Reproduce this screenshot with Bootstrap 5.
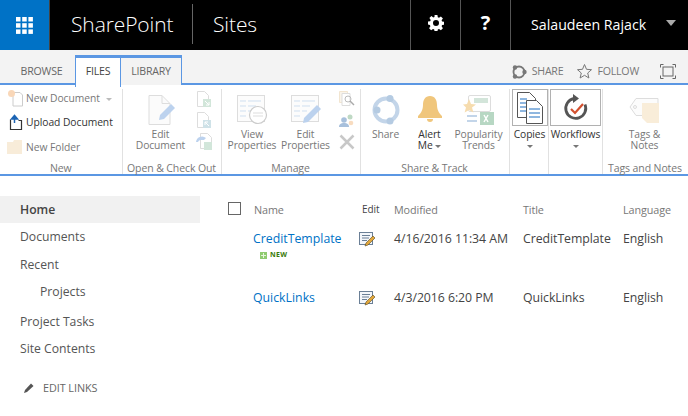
<!DOCTYPE html>
<html lang="en"><head><meta charset="utf-8"><title>Sites</title>
<link href="https://cdn.jsdelivr.net/npm/bootstrap@5.3.0/dist/css/bootstrap.min.css" rel="stylesheet">
<style>
html,body{height:416px;overflow:hidden}
body{font-family:"Open Sans","Noto Sans",sans-serif;font-size:12px;color:#444;background:#fff}
a{text-decoration:none}
.suite{height:50px;background:#000;color:#fff}
.waffle{width:50px;background:#0072c6;border-right:1px solid #444}
.brand{font-size:21px;font-weight:300;height:40px;line-height:41px;margin-top:4px;letter-spacing:-.1px;white-space:nowrap}
.brand-one{width:143px;padding-left:21px;border-right:1px solid #666}
.brand-two{padding-left:20px}
.suite-btn{width:50px;border-left:1px solid #555;font-weight:700;font-size:20px}
.suite-user{width:178px;border-left:1px solid #555;font-size:14.2px;padding:0 12px 0 20px}
.caret-gray{width:0;height:0;border:5.5px solid transparent;border-top:6px solid #aaa;border-bottom:0}
.tabs{height:35px;background:#f3f3f3;border-bottom:2px solid #5b97e3;padding-left:10px}
.rtab{height:30px;margin-top:5px;font-size:10.6px;color:#666;letter-spacing:-.2px}
.rtab-plain{width:63px;padding-top:9px;text-align:center}
.rtab-on{width:46px;margin-left:2px;background:#fff;border:1px solid #5b97e3;border-top:3px solid #5b97e3;border-bottom:0;text-align:center;padding:6px 0 0;color:#444;position:relative;z-index:1;height:32px}
.rtab-lib{width:61px;background:#f3f3f3;border:1px solid #5b97e3;border-top:3px solid #5b97e3;border-left:0;border-bottom:0;text-align:center;padding:6px 0 0}
.tools{font-size:10.6px;color:#777;letter-spacing:-.2px;padding-top:13px}
.gap-star{margin-right:13px}
.gap-text{margin-right:4px}
.gap-share{margin-right:5px}
.focus-ico{margin:0 12px 0 21px}
.ribbon{height:91px;border-bottom:2px solid #5b97e3;color:#777;padding-top:4px;background:#fff}
.rgroup{border-right:1px solid #e1e1e1;height:85px;display:flex;flex-direction:column;flex:none}
.rbody{height:67px;display:flex;flex:none}
.rlabel{font-size:10.5px;color:#777;text-align:center;letter-spacing:-.1px;line-height:15px;white-space:nowrap;padding-top:5px}
.bigbtn{display:flex;flex-direction:column;align-items:center;font-size:10.3px;line-height:11px;text-align:center;letter-spacing:-.1px;color:#777;flex:none;padding-top:6px;white-space:nowrap}
.bigbtn svg{display:block;margin-bottom:4px}
.bigbtn span{display:block}
.dark{color:#333}
.boxed{border:1px solid #b1b1b1;height:37px;display:flex;align-items:center;justify-content:center;margin-bottom:3px}
.boxed svg{margin:0}
.stackbtn{padding-top:0}
.rowbtn{display:flex;flex:none;align-items:center;font-size:10.3px;height:24.5px;letter-spacing:-.05px;white-space:nowrap}
.rowlist{flex-direction:column;padding-left:7px;margin-top:-3px;margin-bottom:3px}
.rowbtn svg{margin-right:2px}
.mini{display:flex;flex-direction:column;justify-content:space-between;height:61px;padding-top:2px;margin-left:8px}
.dn{width:0;height:0;border:3px solid transparent;border-top:3px solid #777;border-bottom:0;display:inline-block;vertical-align:middle}
.bigbtn .dn-under{display:block;margin-top:5px}
.dn-pale{border-top-color:#bbb;margin:3px 0 0 6px}
.w-new{width:122.500px}.w-open{width:99px}.w-manage{width:139px}.w-share{width:149px}.w-copies{width:39px}.w-flow{width:54px}.w-tags{width:85px;border-right:0}
.b-edit{width:54px;margin-left:11px}
.b-view{width:57px;margin-left:2px}
.b-prop{width:50px}
.b-share{width:50px}
.b-alert{width:38px}
.b-pop{width:60px}
.b-copy{width:38px;margin-left:1px}
.b-flow{width:52px;margin-left:1px}
.b-tags{width:84px}
.box-copy{width:36px}
.box-flow{width:51px}
.sidenav{width:200px;padding-top:20px;flex:none}
.nav-it{height:27.3px;line-height:27px;padding-left:20px;font-size:12.2px;color:#555}
.nav-sel{background:#f1f1f1;font-weight:600;color:#444}
.nav-sub{padding-left:40px}
.nav-gap{margin-top:3px}
.nav-edit{color:#666;margin-top:13px;padding-left:23px;font-size:10.8px}
.nav-edit svg{margin-right:8px}
.listing{padding:0 0 0 28px;flex:1}
.lrow{display:grid;grid-template-columns:25px 106px 35px 129px 100px 65px;align-items:center;white-space:nowrap}
.lhead{height:30px;font-size:10.8px;color:#777;margin-top:19px;letter-spacing:-.1px}
.lhead .ed{color:#444;font-size:10px;margin-top:-2px;padding-left:3px}
.lhead .nm{padding-left:1px}
.lcell{font-size:12.3px;color:#444;letter-spacing:-.05px}
.lname{font-size:12.3px;color:#0072c6}
.cbox{width:13px;height:13px;border:1px solid #666;display:block;margin-top:-3px}
.newtag{font-size:7px;font-weight:700;color:#3a7a0a;letter-spacing:.3px;display:flex;align-items:center;gap:3px;margin:-4px 0 0 32px;height:10px}
.r1{height:29px;margin-top:0}
.r2{height:29px;margin-top:24px}
</style></head><body>
<div class="suite d-flex align-items-stretch">
 <div class="waffle d-flex align-items-center justify-content-center">
  <svg width="17" height="17" viewBox="0 0 17 17" fill="#fff"><rect width="4.5" height="4.5"/><rect x="6.2" width="4.5" height="4.5"/><rect x="12.4" width="4.5" height="4.5"/><rect y="6.2" width="4.5" height="4.5"/><rect x="6.2" y="6.2" width="4.5" height="4.5"/><rect x="12.4" y="6.2" width="4.5" height="4.5"/><rect y="12.4" width="4.5" height="4.5"/><rect x="6.2" y="12.4" width="4.5" height="4.5"/><rect x="12.4" y="12.4" width="4.5" height="4.5"/></svg>
 </div>
 <div class="brand brand-one">SharePoint</div>
 <div class="brand brand-two">Sites</div>
 <div class="ms-auto d-flex">
  <div class="suite-btn d-flex align-items-center justify-content-center pb-1">
   <svg width="16" height="16" viewBox="0 0 16 16"><path fill="#fff" fill-rule="evenodd" d="M6.6 0h2.8l.4 2.2 1.2.5L12.9 1.400l2 2-1.300 1.900.5 1.200 2.200.4v2.800l-2.200.4-.5 1.200 1.300 1.900-2 2-1.900-1.300-1.200.5-.4 2.200H6.600l-.4-2.200-1.200-.5-1.900 1.300-2-2 1.300-1.900-.5-1.200L0 9.400V6.600l2.200-.4.5-1.200L1.400 3.100l2-2 1.900 1.300 1.200-.5zM8 5a3 3 0 1 0 0 6 3 3 0 0 0 0-6z"/></svg>
  </div>
  <div class="suite-btn d-flex align-items-center justify-content-center pb-1">?</div>
  <div class="suite-user d-flex align-items-center justify-content-between"><span>Salaudeen Rajack</span><span class="caret-gray mb-1"></span></div>
 </div>
</div>
<div class="tabs d-flex align-items-start">
 <div class="rtab rtab-plain">BROWSE</div>
 <div class="rtab rtab-on">FILES</div>
 <div class="rtab rtab-lib">LIBRARY</div>
 <div class="tools ms-auto d-flex align-items-center">
  <svg class="gap-share" width="16" height="16" viewBox="0 0 16 16"><circle cx="8" cy="8" r="5.500" fill="none" stroke="#777" stroke-width="1.800"/><circle cx="4" cy="3.500" r="2.200" fill="#777"/><circle cx="4" cy="12.500" r="2.200" fill="#777"/><circle cx="13.500" cy="8" r="2.200" fill="#777"/></svg>
  <span class="gap-star">SHARE</span>
  <svg class="gap-text" width="17" height="17" viewBox="0 0 17 17"><path d="M8.500 1.500l2 4.800 5 .4-3.800 3.300 1.200 5-4.400-2.700-4.400 2.700 1.200-5L1.500 6.700l5-.4z" fill="none" stroke="#777"/></svg>
  <span>FOLLOW</span>
  <svg class="focus-ico" width="16" height="15" viewBox="0 0 16 15" fill="none" stroke="#666"><path d="M.5 3.500v-3h3M12.500.5h3v3M.5 11.500v3h3M12.500 14.500h3v-3"/><rect x="3" y="3" width="10" height="9"/></svg>
 </div>
</div>
<div class="ribbon d-flex">
 <div class="rgroup w-new">
  <div class="rbody rowlist">
   <div class="rowbtn"><svg width="17" height="19" viewBox="0 0 17 19" fill="none"><path d="M6 3.500h7l2.500 2.500v11H6z" stroke="#ccc" fill="#fff"/><circle cx="4.500" cy="4.500" r="3.500" fill="#f9d7b8"/></svg><span>New Document</span><span class="dn dn-pale"></span></div>
   <div class="rowbtn dark"><svg width="17" height="19" viewBox="0 0 17 19" fill="none"><path d="M3.500 6.500v10h11V7.500h-3" stroke="#333" stroke-width="1.200"/><path d="M7.500 10V3M4.500 6l3-3.500 3 3.500z" stroke="#1c64b4" fill="#1c64b4" stroke-width="1.500"/></svg><span>Upload Document</span></div>
   <div class="rowbtn"><svg width="17" height="14" viewBox="0 0 17 14"><path d="M0 2h6l1-2h8v14H0z" fill="#f8ecd9"/></svg><span>New Folder</span></div>
  </div>
  <div class="rlabel">New</div>
 </div>
 <div class="rgroup w-open">
  <div class="rbody">
   <div class="bigbtn b-edit">
    <svg width="30" height="30" viewBox="0 0 30 30" fill="none"><path d="M3 .5h13l8 8v21H3z" stroke="#ddd" fill="#fbfbfb"/><path d="M16 .5v8h8" stroke="#ddd"/><path d="M13 25l1-5L25 9l4 4-11 11z" fill="#bcd2ee"/></svg>
    <span>Edit</span><span>Document</span>
   </div>
   <div class="mini">
    <svg width="16" height="17" viewBox="0 0 16 17"><path d="M1.500 .5h7l4 4v11h-11z" fill="#fff" stroke="#ddd"/><rect x="7" y="8" width="8" height="8" fill="#d2e6da"/><path d="M9 10l4 4m0-3v3h-3" stroke="#fff" fill="none"/></svg>
    <svg width="16" height="17" viewBox="0 0 16 17"><path d="M1.500 .5h7l4 4v11h-11z" fill="#fff" stroke="#ddd"/><rect x="7" y="8" width="8" height="8" fill="#cfe2e8"/><path d="M13 14l-4-4m0 3v-3h3" stroke="#fff" fill="none"/></svg>
    <svg width="17" height="17" viewBox="0 0 17 17"><path d="M4.500 .5h7l4 4v11h-11z" fill="#fff" stroke="#ddd"/><path d="M0 9a6 6 0 0 1 10-4l-2 2h-3a3 3 0 0 0-3 2z" fill="#bcd2ee"/><rect x="8" y="9" width="8" height="8" fill="#d2e6da"/></svg>
   </div>
  </div>
  <div class="rlabel">Open &amp; Check Out</div>
 </div>
 <div class="rgroup w-manage">
  <div class="rbody">
   <div class="bigbtn b-view">
    <svg width="32" height="30" viewBox="0 0 32 30" fill="none"><rect x="1.500" y=".5" width="27" height="26" stroke="#ddd" fill="#fcfcfc"/><path d="M4 6h6M12 6h13M4 11h6M12 11h8M4 16h6M12 16h5M4 21h6" stroke="#cfdff0"/><circle cx="22" cy="20" r="8.500" fill="#fff" stroke="#ccc" stroke-width="1.200"/><path d="M17 18h10M17 21h10" stroke="#ddd"/></svg>
    <span>View</span><span>Properties</span>
   </div>
   <div class="bigbtn b-prop">
    <svg width="32" height="30" viewBox="0 0 32 30" fill="none"><rect x="1.500" y=".5" width="27" height="26" stroke="#ddd" fill="#fcfcfc"/><path d="M4 6h6M12 6h13M4 11h6M12 11h8M4 16h6M12 16h5M4 21h6" stroke="#cfdff0"/><path d="M13 28l1-5 13-13 4 4-13 13z" fill="#bcd2ee"/></svg>
    <span>Edit</span><span>Properties</span>
   </div>
   <div class="mini">
    <svg width="16" height="16" viewBox="0 0 16 16" fill="none"><path d="M.5.500h8v11h-8z" stroke="#f2e5d0" fill="#faf4ea"/><path d="M3 2.500h8v12H3z" stroke="#ddd" fill="#fff"/><circle cx="9" cy="8" r="3" stroke="#bbb"/><path d="M11 10l4 4" stroke="#aaa" stroke-width="1.500"/></svg>
    <svg width="16" height="16" viewBox="0 0 16 16"><circle cx="5" cy="7" r="2.800" fill="#a8c0dc"/><path d="M0 14c0-3 2-4 5-4s5 1 5 4z" fill="#a8c0dc"/><circle cx="11" cy="4" r="2.500" fill="#bfd9c4"/><circle cx="12" cy="10" r="2.300" fill="#f8dcc0"/></svg>
    <svg width="16" height="16" viewBox="0 0 16 16"><path d="M1.500 1.500l13 13M14.500 1.500l-13 13" stroke="#c8c8c8" stroke-width="2.500"/></svg>
   </div>
  </div>
  <div class="rlabel">Manage</div>
 </div>
 <div class="rgroup w-share">
  <div class="rbody">
   <div class="bigbtn b-share">
    <svg width="30" height="30" viewBox="0 0 30 30"><circle cx="15" cy="15" r="11.500" fill="none" stroke="#c3d5e9" stroke-width="4"/><circle cx="19" cy="3.500" r="3.500" fill="#b5cbe2"/><circle cx="6" cy="15" r="3.500" fill="#b5cbe2"/><circle cx="19" cy="26" r="3.500" fill="#b5cbe2"/></svg>
    <span>Share</span>
   </div>
   <div class="bigbtn dark b-alert">
    <svg width="26" height="30" viewBox="0 0 26 30"><path d="M13 1c5 0 7 4 7 9 0 6 3 9 5 11v2H1v-2c2-2 5-5 5-11 0-5 2-9 7-9z" fill="#f0c67c"/><path d="M10 24a3 3 0 0 0 6 0z" fill="#f0c67c"/></svg>
    <span>Alert</span><span>Me <i class="dn"></i></span>
   </div>
   <div class="bigbtn b-pop">
    <svg width="32" height="30" viewBox="0 0 32 30" fill="none"><rect x="5.500" y=".5" width="22" height="16" rx="1.500" stroke="#ddd"/><rect x="11" y="3" width="14" height="5" fill="#d3e5da"/><path d="M6 4l2 5 5 .4-4 3.200 1.400 5L6 15l-4.400 2.600L3 12.600 0 9.400 4 9z" fill="#f6dcae"/><rect x="17" y="17" width="14" height="13" fill="#b7d7c3"/><path d="M21 20l4 7m0-7l-4 7" stroke="#fff" stroke-width="1.500"/><path d="M4 21h10M4 26h10" stroke="#c3d5e9" stroke-width="2"/></svg>
    <span>Popularity</span><span>Trends</span>
   </div>
  </div>
  <div class="rlabel">Share &amp; Track</div>
 </div>
 <div class="rgroup w-copies">
  <div class="rbody">
   <div class="bigbtn dark b-copy stackbtn">
    <div class="boxed box-copy">
     <svg width="28" height="32" viewBox="0 0 28 32" fill="none"><path d="M1.500.5h12l6 6v19h-18z" fill="#fff" stroke="#555"/><path d="M4 7h7M4 11h11M4 15h11M4 19h11" stroke="#1e6fc0"/><path d="M10.500 8.500h10l6 6v17h-16z" fill="#fff" stroke="#555"/><path d="M13 17h11M13 21h11M13 25h11" stroke="#1e6fc0"/></svg>
    </div>
    <span>Copies</span><i class="dn dn-under"></i>
   </div>
  </div>
 </div>
 <div class="rgroup w-flow">
  <div class="rbody">
   <div class="bigbtn dark b-flow stackbtn">
    <div class="boxed box-flow">
     <svg width="26" height="28" viewBox="0 0 26 28" fill="none"><path d="M11 4.500a10 10 0 1 0 11 6" stroke="#555" stroke-width="2.800"/><path d="M10 0l6 4.500-6 4.500z" fill="#555"/><path d="M8 15l4 4 8-9" stroke="#d3502f" stroke-width="2.200"/></svg>
    </div>
    <span>Workflows</span><i class="dn dn-under"></i>
   </div>
  </div>
 </div>
 <div class="rgroup w-tags">
  <div class="rbody">
   <div class="bigbtn b-tags">
    <svg width="32" height="30" viewBox="0 0 32 30" fill="none"><path d="M7 3.500h22v17H7l-6-8.500z" stroke="#ddd" fill="#fcfcfc"/><circle cx="6" cy="12" r="1.500" stroke="#ddd"/><path d="M13 8h17v20H18l-5-5z" fill="#f9edd9"/></svg>
    <span>Tags &amp;</span><span>Notes</span>
   </div>
  </div>
  <div class="rlabel">Tags and Notes</div>
 </div>
</div>
<div class="d-flex">
 <nav class="sidenav">
  <div class="nav-it nav-sel">Home</div>
  <div class="nav-it">Documents</div>
  <div class="nav-it">Recent</div>
  <div class="nav-it nav-sub">Projects</div>
  <div class="nav-it nav-gap">Project Tasks</div>
  <div class="nav-it">Site Contents</div>
  <div class="rowbtn nav-edit">
   <svg width="12" height="12" viewBox="0 0 12 12"><path d="M1 11l1-3 6-6.500 2.500 2.500L4 10z" fill="#555"/></svg><span>EDIT LINKS</span>
  </div>
 </nav>
 <main class="listing">
  <div class="lrow lhead">
   <span class="cbox"></span><span class="nm">Name</span><span class="ed">Edit</span><span>Modified</span><span>Title</span><span>Language</span>
  </div>
  <div class="lrow r1">
   <span></span><a class="lname" href="#">CreditTemplate</a>
   <svg width="17" height="15" viewBox="0 0 17 15" fill="none"><rect x=".5" y=".5" width="13" height="12" fill="#f3f6fa" stroke="#6a7f96"/><path d="M3 3.500h8M3 6h7M3 8.500h5" stroke="#6a7f96"/><path d="M6 14l1-3 7-7 2 2-7 7z" fill="#e2a73b" stroke="#5b4a20" stroke-width=".6"/></svg>
   <span class="lcell">4/16/2016 11:34 AM</span><span class="lcell">CreditTemplate</span><span class="lcell">English</span>
  </div>
  <div class="newtag"><svg width="7" height="7" viewBox="0 0 7 7"><rect width="7" height="7" fill="#8fcb6f"/><path d="M3.500 1v5M1 3.500h5" stroke="#e6f5da"/></svg>NEW</div>
  <div class="lrow r2">
   <span></span><a class="lname" href="#">QuickLinks</a>
   <svg width="17" height="15" viewBox="0 0 17 15" fill="none"><rect x=".5" y=".5" width="13" height="12" fill="#f3f6fa" stroke="#6a7f96"/><path d="M3 3.500h8M3 6h7M3 8.500h5" stroke="#6a7f96"/><path d="M6 14l1-3 7-7 2 2-7 7z" fill="#e2a73b" stroke="#5b4a20" stroke-width=".6"/></svg>
   <span class="lcell">4/3/2016 6:20 PM</span><span class="lcell">QuickLinks</span><span class="lcell">English</span>
  </div>
 </main>
</div>
<script src="https://cdn.jsdelivr.net/npm/bootstrap@5.3.0/dist/js/bootstrap.bundle.min.js"></script>
</body></html>
